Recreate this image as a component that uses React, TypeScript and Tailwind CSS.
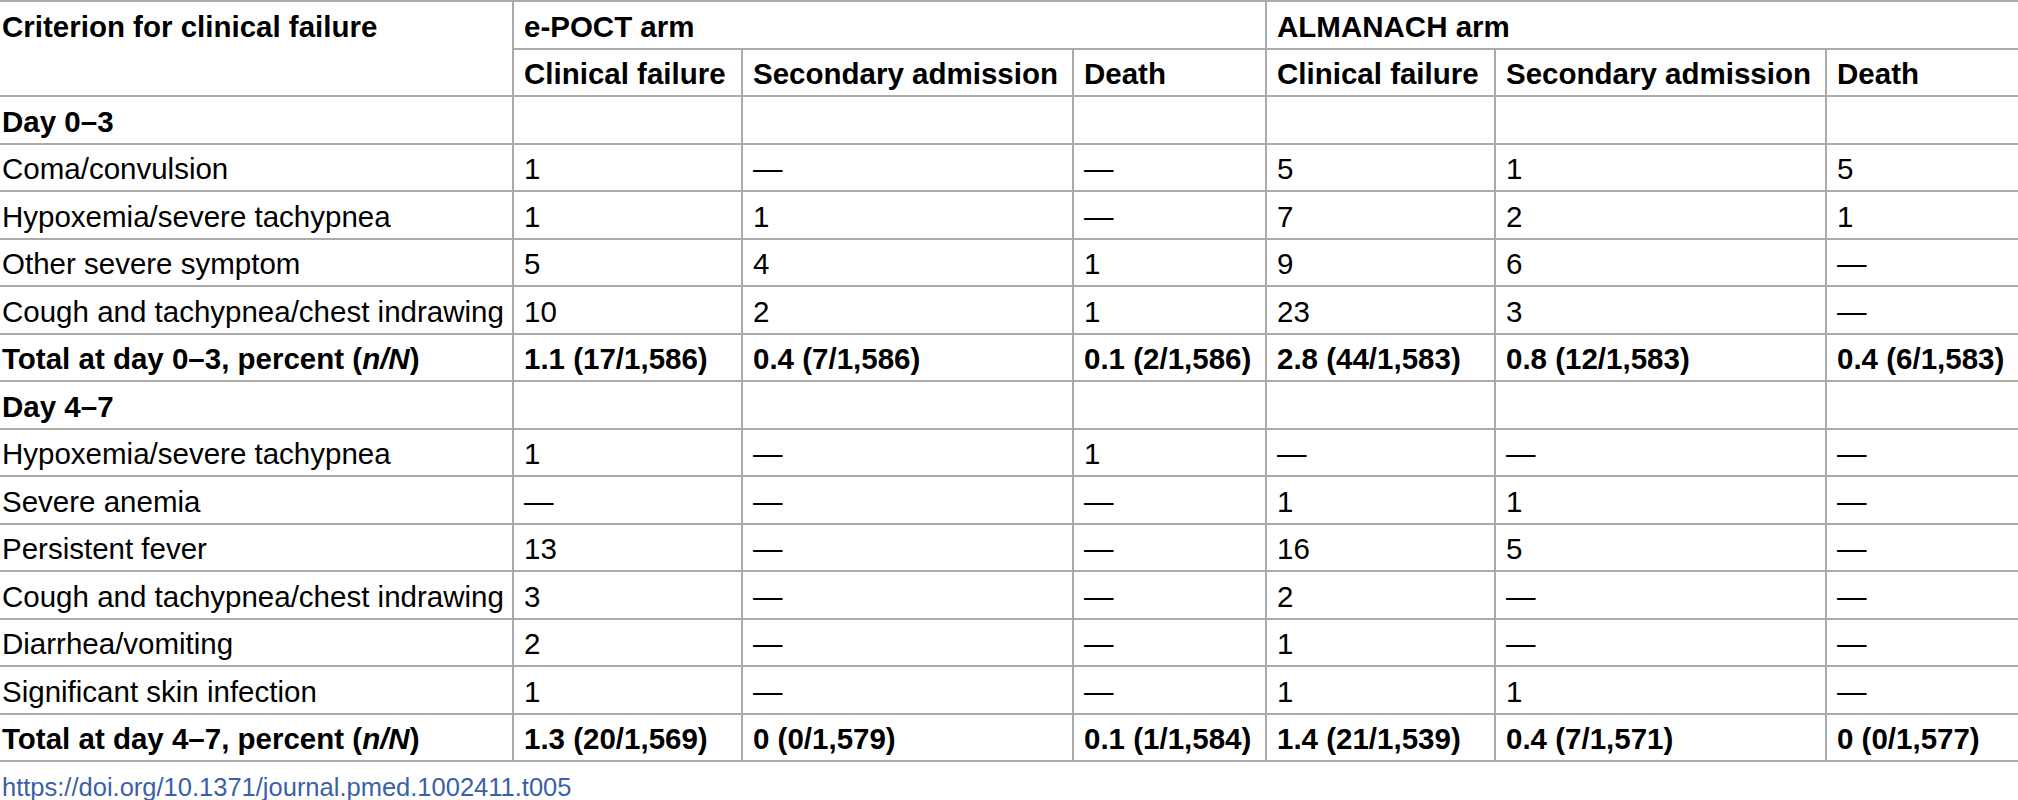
type Row = { label: string; section?: boolean; total?: boolean; cells?: string[] };

const rows: Row[] = [
  { label: 'Day 0–3', section: true },
  { label: 'Coma/convulsion', cells: ['1', '—', '—', '5', '1', '5'] },
  { label: 'Hypoxemia/severe tachypnea', cells: ['1', '1', '—', '7', '2', '1'] },
  { label: 'Other severe symptom', cells: ['5', '4', '1', '9', '6', '—'] },
  { label: 'Cough and tachypnea/chest indrawing', cells: ['10', '2', '1', '23', '3', '—'] },
  {
    label: 'Total at day 0–3',
    total: true,
    cells: ['1.1 (17/1,586)', '0.4 (7/1,586)', '0.1 (2/1,586)', '2.8 (44/1,583)', '0.8 (12/1,583)', '0.4 (6/1,583)'],
  },
  { label: 'Day 4–7', section: true },
  { label: 'Hypoxemia/severe tachypnea', cells: ['1', '—', '1', '—', '—', '—'] },
  { label: 'Severe anemia', cells: ['—', '—', '—', '1', '1', '—'] },
  { label: 'Persistent fever', cells: ['13', '—', '—', '16', '5', '—'] },
  { label: 'Cough and tachypnea/chest indrawing', cells: ['3', '—', '—', '2', '—', '—'] },
  { label: 'Diarrhea/vomiting', cells: ['2', '—', '—', '1', '—', '—'] },
  { label: 'Significant skin infection', cells: ['1', '—', '—', '1', '1', '—'] },
  {
    label: 'Total at day 4–7',
    total: true,
    cells: ['1.3 (20/1,569)', '0 (0/1,579)', '0.1 (1/1,584)', '1.4 (21/1,539)', '0.4 (7/1,571)', '0 (0/1,577)'],
  },
];

const line = 'border-[#ababab]';
const cell = `h-[47.5px] border-2 ${line} pl-[10px] pt-[3px] align-middle`;
const first = `h-[47.5px] border-2 border-l-0 ${line} pl-[2px] pt-[3px] align-middle`;

export default function App() {
  return (
    <div className="h-[800px] w-[2018px] overflow-hidden bg-white font-['Liberation_Sans',Arial,sans-serif] text-[29.5px] leading-[33px] text-black">
      <table className="w-[2018px] table-fixed border-collapse border-t-2 border-b-2 border-[#9a9a9a] text-left">
        <colgroup>
          <col className="w-[513px]" />
          <col className="w-[229px]" />
          <col className="w-[331px]" />
          <col className="w-[193px]" />
          <col className="w-[229px]" />
          <col className="w-[331px]" />
          <col className="w-[192px]" />
        </colgroup>
        <thead>
          <tr>
            <th rowSpan={2} className={`${first} align-top pt-[8px] font-bold`}>
              Criterion for clinical failure
            </th>
            <th colSpan={3} className={`${cell} font-bold`}>
              e-POCT arm
            </th>
            <th colSpan={3} className={`${cell} border-r-0 font-bold`}>
              ALMANACH arm
            </th>
          </tr>
          <tr>
            {['Clinical failure', 'Secondary admission', 'Death', 'Clinical failure', 'Secondary admission', 'Death'].map(
              (h, i) => (
                <th key={i} className={`${cell} ${i === 5 ? 'border-r-0' : ''} font-bold`}>
                  {h}
                </th>
              ),
            )}
          </tr>
        </thead>
        <tbody>
          {rows.map((r, ri) => (
            <tr key={ri}>
              <td className={`${first} ${r.section || r.total ? 'font-bold' : ''}`}>
                {r.label}
                {r.total && (
                  <>
                    , percent (<i>n/N</i>)
                  </>
                )}
              </td>
              {(r.cells ?? ['', '', '', '', '', '']).map((c, ci) => (
                <td key={ci} className={`${cell} ${ci === 5 ? 'border-r-0' : ''} ${r.total ? 'font-bold' : ''}`}>
                  {c}
                </td>
              ))}
            </tr>
          ))}
        </tbody>
      </table>
      <div className="pl-[2px] pt-[10px] text-[25.5px] leading-[30px] text-[#3b5fa8]">
        https://doi.org/10.1371/journal.pmed.1002411.t005
      </div>
    </div>
  );
}
